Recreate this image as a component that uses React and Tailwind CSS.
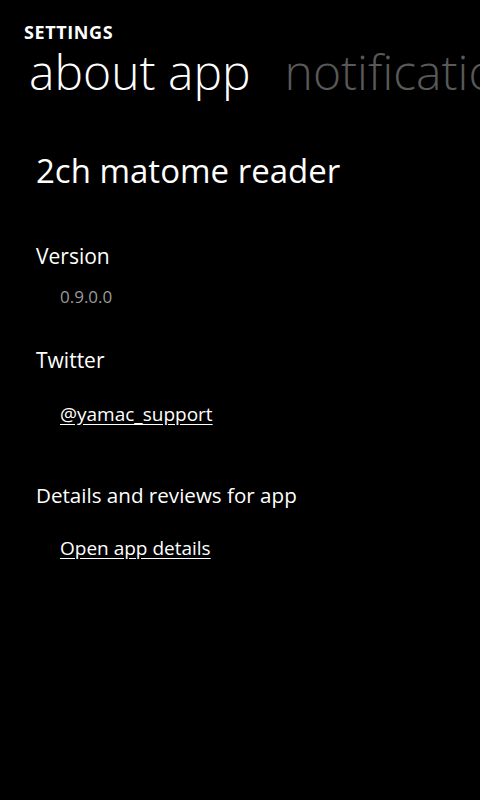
import React from 'react';

function App() {
  const font = { fontFamily: '"Open Sans", "Noto Sans", sans-serif' };

  return (
    <div className="w-[480px] h-[800px] bg-black text-white overflow-hidden" style={font}>
      {/* Pivot title */}
      <div className="pt-[21px] pl-[24px] text-[18px] leading-[22px] font-bold tracking-[0.6px]">
        SETTINGS
      </div>

      {/* Pivot headers */}
      <div className="flex gap-[34px] pl-[29px] whitespace-nowrap text-[48px] leading-[48px] font-light mt-[5px]">
        <span className="text-white">about app</span>
        <span className="text-[#595959]">notifications</span>
      </div>

      {/* About content */}
      <div className="pl-[36px] pt-[55px] flex flex-col">
        <div className="text-[33px] leading-[40px] font-normal">2ch matome reader</div>

        <div className="mt-[51px] text-[21px] leading-[28px]">Version</div>
        <div className="mt-[15px] pl-[24px] text-[17px] leading-[24px] text-[#9a9a9a]">0.9.0.0</div>

        <div className="mt-[37px] text-[21px] leading-[28px]">Twitter</div>
        <a href="#" className="mt-[27px] pl-[24px] text-[19px] leading-[26px] underline underline-offset-[3px] self-start">
          @yamac_support
        </a>

        <div className="mt-[54px] text-[20.6px] leading-[28px]">Details and reviews for app</div>
        <a href="#" className="mt-[26px] pl-[24px] text-[19px] leading-[26px] underline underline-offset-[3px] self-start">
          Open app details
        </a>
      </div>
    </div>
  );
}

export default App;
